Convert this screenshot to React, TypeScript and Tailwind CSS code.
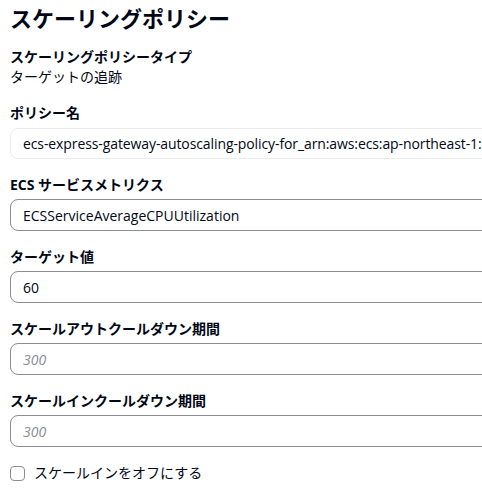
const FONT = "font-['Open_Sans','Noto_Sans_CJK_JP',sans-serif]";

function Field({ label, value, placeholder }: { label: string; value?: string; placeholder?: string }) {
  return (
    <div className="flex flex-col">
      <div className="text-[14px] leading-[20px] font-bold text-[#000716] mb-[4px]">{label}</div>
      <div className="h-[32px] w-[520px] rounded-[8px] border border-[#8c8c94] flex items-center px-[12px] text-[14px]">
        {value ? (
          <span className="text-[#000716]">{value}</span>
        ) : (
          <span className="italic text-[#8c8c94]">{placeholder}</span>
        )}
      </div>
    </div>
  );
}

export default function App() {
  return (
    <div className={`${FONT} w-[482px] h-[489px] overflow-hidden bg-white pl-[10px] pt-[4px] text-[#000716]`}>
      <h2 className="text-[22px] leading-[28px] font-bold text-[#000716]">スケーリングポリシー</h2>

      <div className="mt-[15px] flex flex-col gap-[16px]">
        <div>
          <div className="text-[14px] leading-[20px] font-bold">スケーリングポリシータイプ</div>
          <div className="text-[14px] leading-[20px]">ターゲットの追跡</div>
        </div>

        <div className="flex flex-col">
          <div className="text-[14px] leading-[20px] font-bold mb-[5px]">ポリシー名</div>
          <div className="h-[31px] w-[520px] rounded-[8px] border border-[#e9ebed] flex items-center px-[12px] text-[14px] tracking-[-0.1px] whitespace-nowrap">
            ecs-express-gateway-autoscaling-policy-for_arn:aws:ecs:ap-northeast-1:
          </div>
        </div>

        <Field label="ECS サービスメトリクス" value="ECSServiceAverageCPUUtilization" />
        <Field label="ターゲット値" value="60" />
        <Field label="スケールアウトクールダウン期間" placeholder="300" />
        <Field label="スケールインクールダウン期間" placeholder="300" />

        <label className="flex items-center gap-[9px] text-[14px] leading-[20px]">
          <span className="w-[15px] h-[15px] rounded-[4px] border border-[#8c8c94] bg-white" />
          <span>スケールインをオフにする</span>
        </label>
      </div>
    </div>
  );
}
